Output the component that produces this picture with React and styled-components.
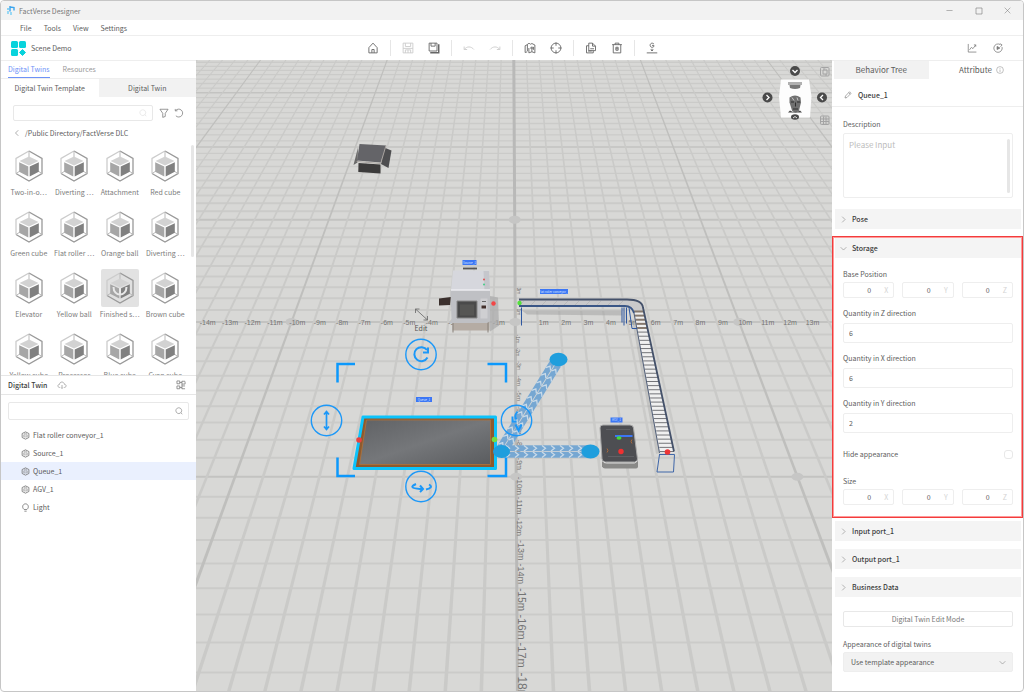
import React from 'react'
import styled, { createGlobalStyle } from 'styled-components'

const templates = [
  'Two-in-o⋯', 'Diverting ⋯', 'Attachment', 'Red cube',
  'Green cube', 'Flat roller ⋯', 'Orange ball', 'Diverting ⋯',
  'Elevator', 'Yellow ball', 'Finished s⋯', 'Brown cube',
  'Yellow cube', 'Processor', 'Blue cube', 'Cyan cube',
]

const twins = ['Flat roller conveyor_1', 'Source_1', 'Queue_1', 'AGV_1', 'Light']

/* ---------- icons ---------- */

const icons = {
  home: <path d="M2.500 7.500 8 1.500l5.500 6V14.500H2.500zM6.500 14.500V10h3v4.500" />,
  save: <path d="M1.500 1.500h13v13h-13zM4.500 1.500v4.500h7v-4.500M1.500 8.500h13M4.500 14.500v-4h7v4M8 10.500v4" />,
  saveAs: (
    <>
      <path d="M1.500 1.500h10.500v10.500h-10.500zM4 1.500v4h5.500v-4" />
      <path d="M14.300 3v11.300H3" strokeWidth="2" />
    </>
  ),
  undo: <path d="M1.500 6v4h4M1.800 9.800C5 5.500 11 5.500 14.500 10" />,
  redo: <path d="M14.500 6v4h-4M14.200 9.800C11 5.500 5 5.500 1.500 10" />,
  map: <path d="M4.500 3.500 1.500 5v9l3-1M4.500 3.500V12M4.500 3.500C5 1.500 8 1.500 8.500 3l2-1 4 2v10.500l-4-1.500-4 1.500V8M10.500 6v7M8 8h5M12.500 6.500v4" />,
  target: (
    <>
      <circle cx="8" cy="8" r="6.500" />
      <path d="M8 .5v4.500M8 11v4.500M.5 8H5M11 8h4.500" />
    </>
  ),
  copy: <path d="M5 1.500h5l4 4v6H5zM10 1.500v4h4M5 5H2v9.500h9v-3M4 12h5M7 9h5" />,
  trash: <path d="M1.500 3.500h13M5.500 3.500v-2h5v2M3 3.500v11h10v-11M6.500 7v4h3V7zM6.500 9h3" />,
  ground: <path d="M10.500 2.500C8 .5 5.500 2 5.500 4.500S8.500 8 10.500 6V4.500H8M8 9v3M6.500 10 8 12l1.500-2M1 14.500h14" />,
  chart: <path d="M2 1.500v13h13M4 11l3-4 2.500 2L14 3M11 3h3v3" />,
  play: (
    <>
      <path d="M14.500 6.500A6.700 6.700 0 1 1 11.500 2.500M11 1l3.500 2-2.500 3" />
      <path d="M6.500 5.500v5L11 8z" fill="currentColor" />
    </>
  ),
  search: <path d="M7.500 1.500a5.800 5.800 0 1 0 .1 0M11.800 11.500l2.700 3" />,
  filter: <path d="M1.500 2h13L10 8.500v5L6 15V8.500z" />,
  refresh: <path d="M2 4.500v-3M2 4.500h3.500M2.500 4.300A6.300 6.300 0 1 1 3 12.500" />,
  left: <path d="M10.500 2.500 5 8l5.500 5.500" />,
  right: <path d="M5 1.500 11.500 8 5 14.500" />,
  down: <path d="M1.500 5 8 11.500 14.500 5" />,
  cloud: <path d="M4.500 12C.5 12 .5 7 4 7c.5-5 7-5 8 0 3.500 0 3.500 5-.5 5M8 8v5.500M6.500 12 8 13.500 9.500 12" />,
  tree: <path d="M1.500 1.500H6V6H1.500zM1.500 9.500H6V14H1.500zM6 4h3.500M6 12h3.500M9.500 1.500v13M9.500 2h5M9.500 6.500h5v-4M9.500 9.500h5M9.500 14h5" />,
  cube: (
    <>
      <path d="M8 1.500l6 3v7l-6 3-6-3v-7z" />
      <path d="M5 7v3.500h6V7zM5 5.500 8 4l3 1.500" strokeWidth="1" />
    </>
  ),
  bulb: <path d="M5.500 11.500C1 8 3 1.500 8 1.500s7 6.500 2.500 10zM6 14.500h4" />,
  pencil: <path d="M2 14l1-4 8-8.500 3 3L6 13zM9.500 3.500l3 3" />,
  info: (
    <>
      <circle cx="8" cy="8" r="6.800" />
      <path d="M8 7v5M8 4v1.500" />
    </>
  ),
  minimize: <path d="M1 8h14" />,
  maximize: <path d="M2 2h12v12H2z" />,
  close: <path d="M1.500 1.500l13 13M14.500 1.500l-13 13" />,
}

const Glyph = styled.svg`
  width: ${p => p.$size || 10}px;
  height: ${p => p.$size || 10}px;
  flex: none;
  display: block;
  fill: none;
  stroke: currentColor;
  stroke-width: ${p => p.$weight || 1.2};
  color: ${p => p.$color || '#777'};
`

const Icon = ({ name, size, color, weight }) => (
  <Glyph viewBox="0 0 16 16" $size={size} $color={color} $weight={weight} aria-hidden="true">
    {icons[name]}
  </Glyph>
)

const TemplateIcon = ({ loading }) => (
  <svg width="30" height="32" viewBox="0 0 30 32" aria-hidden="true">
    <path d="M15 1 28 8.500v15L15 31 2 23.500v-15z" fill={loading ? '#e0e0e0' : '#fff'} />
    <path d="M15 1 2 8.500v15" fill="none" stroke="#ccc" strokeWidth="1.300" />
    <path d="M15 1 28 8.500v15L15 31 2 23.500" fill="none" stroke="#999" strokeWidth="1.300" />
    <path d="M15 1v6M2 23.500l4-2.500M28 23.500l-4-2.500" stroke="#bbb" />
    <path d="M15 6.500 24.500 11l-9.500 4.500L5.500 11z" fill="#d2d2d2" />
    <path d="M5.200 12.200 14.300 16.500v10L5.200 21.700z" fill="#a6a6a6" />
    <path d="M24.800 12.200 15.700 16.500v10l9.100-4.800z" fill="#808080" />
    {loading && <path d="M8.500 15c0 10 13 10 13 0M15 16v7" fill="none" stroke="#e8e8e8" strokeWidth="2" />}
  </svg>
)

/* ---------- 3D scene ---------- */

// ground plane projection, one unit is a metre
const rowY = k => (322.5 + 5.74 * k) / (1 - 0.0204 * k)
const axisX = y => 513.8 + (y - 60) * 0.0057
const colX = (m, y) => axisX(y) + m * 22.4 * ((y + 281) / 604)

const range = (from, to) => Array.from({ length: to - from + 1 }, (_, i) => from + i)

const Floor = () => (
  <g>
    <rect x="-400" y="-200" width="1900" height="1200" fill="#d8d8d6" />
    {range(-46, 18).map(k => (
      <line key={k} x1="-400" x2="1500" y1={rowY(k)} y2={rowY(k)}
        stroke={k % 10 === 0 ? '#c3c3c1' : '#cbcbc9'} strokeWidth={k < -15 ? 1.3 : 2} />
    ))}
    {range(-50, 50).filter(m => m !== 0).map(m => {
      const w = 0.05
      const pts = [[m - w, 0], [m + w, 0], [m + w, 760], [m - w, 760]]
      return (
        <polygon key={m} points={pts.map(([c, y]) => `${colX(c, y)},${y}`).join(' ')}
          fill={m % 10 === 0 ? '#bfbfbd' : '#cacac8'} />
      )
    })}
    <line x1={axisX(0)} y1="0" x2={axisX(760)} y2="760" stroke="#b9b9b8" strokeWidth="3" />
    {[[0, -10], [0, 0], [0, 10], [-10, 0], [10, 0], [10, 10]].map(([m, k]) => (
      <ellipse key={`${m}:${k}`} cx={colX(m, rowY(k))} cy={rowY(k)} rx="6" ry="4" fill="#c6c6c5" />
    ))}
  </g>
)

const Rulers = () => (
  <g fill="#747474" fontFamily='"Liberation Sans", Arial, sans-serif'>
    {range(-14, 13).filter(m => m !== 0).map(m => (
      <text key={m} x={colX(m, 323) + 6} y="325" fontSize="7" textAnchor="middle">{m}m</text>
    ))}
    {range(1, 18).map(k => (
      <text key={k} fontSize={Math.round((rowY(k + 1) - rowY(k)) * 0.38)}
        transform={`translate(${axisX(rowY(k)) + 1} ${rowY(k)}) rotate(90)`}>-{k}m</text>
    ))}
    <text fontSize="5" transform="translate(517 309) rotate(90)">1m</text>
    <text fontSize="5" transform="translate(517 288) rotate(90)">3m</text>
  </g>
)

const Track = ({ x1, y1, x2, y2 }) => {
  const length = Math.hypot(x2 - x1, y2 - y1)
  const angle = Math.atan2(y2 - y1, x2 - x1) * 180 / Math.PI
  return (
    <g transform={`translate(${x1} ${y1}) rotate(${angle})`}>
      {[-3.3, 3.3].map(lane => (
        <g key={lane} transform={`translate(0 ${lane})`}>
          <rect y="-2.900" width={length} height="5.800" fill="#76a7d2" />
          {range(1, Math.floor(length / 9)).map(i => (
            <path key={i} d={`M${i * 9 - 4}-2.800l3.500 2.800-3.500 2.800`} fill="none" stroke="#c9dae8" strokeWidth="1.300" />
          ))}
        </g>
      ))}
    </g>
  )
}

const Tag = ({ x, y, w, children }) => (
  <g>
    <rect x={x - w / 2} y={y - 2.5} width={w} height="5" fill="#3b76f5" />
    <text x={x} y={y + 1} fontSize="3" fill="#dbe6ff" textAnchor="middle">{children}</text>
  </g>
)

const Box = () => (
  <g>
    <path d="M358 148 353.500 165.500 357.500 163z" fill="#6a6a6a" />
    <path d="M384 148l7.500 3-3 17.500-7.500-4z" fill="#4e4e50" />
    <path d="M358.500 163.500 380.500 165v9l-22.200-1.500z" fill="#3c3b3b" />
    <path d="M359.500 144.500 386 146l-5.300 17-23.700-2z" fill="#646468" />
    <path d="M386 146l-5.300 18-24-2" fill="none" stroke="#a9a4a0" />
  </g>
)

const SourceMachine = () => (
  <g>
    <path d="M488 296l10 2 1 28-9 6z" fill="#aaa" opacity=".7" />
    <path d="M452.500 323h37v8h-37z" fill="#b5aca4" />
    <path d="M453 322v11M488 322v11" stroke="#88817a" />
    <path d="M439 299l12-1.500-1 8-11 .5z" fill="#3b302d" />
    <path d="M451 305l4 8" stroke="#999" />
    <path d="M453 271h36l1 20h-39z" fill="#d6d7dd" />
    <path d="M483.500 271.500h5.500l1 20h-5.500z" fill="#c5c6cc" />
    <path d="M450.500 290.500h39.500v31l-3 2h-38l2.500-4z" fill="#bfc0c4" />
    <path d="M451 290.500h39" stroke="#ececf0" strokeWidth="1.500" />
    <path d="M457 301.500h20v17h-20z" fill="#4a4a4a" stroke="#888" />
    <path d="M460 305h14v11h-14z" fill="#565654" />
    <path d="M480.500 299v20h7v-20z" fill="#cfcfd2" />
    <path d="M481.500 306h4.500v3h-4.500z" fill="#43302c" />
    <path d="M482 302h4" stroke="#666" />
    <circle cx="484" cy="280" r=".9" fill="#d44" />
    <circle cx="484" cy="285" r="1" fill="#4c8" />
    <path d="M463 269h14" stroke="#555" strokeWidth="1.800" />
    <circle cx="493.500" cy="304" r="2.200" fill="#f24646" />
  </g>
)

const Conveyor = () => (
  <g fill="none">
    <path d="M522 311h100v5l-95-1z" fill="#999" opacity=".45" stroke="none" />
    <path d="M634 320l24 134" stroke="#888" strokeWidth="4" opacity=".25" />
    <path d="M519 300h108q15 0 16 8l31 144-14 1-27-140q-2-5-8-6H519z" fill="#c9c9cb" />
    <path d="M634 312h9.500l31 141H660z" fill="#f0f0f0" />
    {range(0, 9).map(i => <path key={i} d={`M${524 + i * 11} 301.500l-4 4`} stroke="#aaa" strokeWidth=".5" />)}
    {range(0, 34).map(i => {
      const t = i / 34
      const y = 312 + 140 * t
      return (
        <path key={i} d={`M${634 + 26 * t} ${y}L${644 + 30 * t} ${y}`}
          stroke={i < 5 ? '#85786d' : '#65676b'} strokeWidth={i < 5 ? 2 : 0.9} />
      )
    })}
    <path d="M519 300h108q15 0 16 8l31 144" stroke="#44516a" strokeWidth="1.800" />
    <path d="M519 306.500h106q7 0 9 7" stroke="#3a5686" strokeWidth="1.800" />
    <path d="M634 313.500l25.500 140" stroke="#52607a" />
    <path d="M521.500 308v18M622 308v15M624 308v18M626.500 308v16M629 308l3 21h5" stroke="#2e57a0" />
    <path d="M659 455h15.500M659.500 455l-2.500 17.500h16.500l1-17.500" stroke="#3f66a8" />
    <circle cx="519.500" cy="303.500" r="2.200" fill="#55e03b" />
    <circle cx="667.500" cy="452.500" r="2.800" fill="#ee3434" />
  </g>
)

const Queue = () => (
  <g>
    <path d="M363 417.500h132.500v51.500H354z" fill="#8d5a2e" stroke="#0cc3fb" strokeWidth="3" strokeLinejoin="round" />
    <path d="M366.500 420.500h124v44.500h-131z" fill="url(#steel)" stroke="#b0723a" strokeWidth=".8" />
    <circle cx="359" cy="440.500" r="2.800" fill="#e94141" />
    <circle cx="494.500" cy="440" r="2.800" fill="#74dd43" />
  </g>
)

const Agv = () => (
  <g>
    <path d="M602 460l36 1v6q0 2-2 2h-31q-2 0-3-2z" fill="#898987" />
    <path d="M603 425.500h27q3 0 3.500 3l4 31q0 3-3 3h-29q-3 0-3.500-3l-2-31q0-3 3-3z" fill="#4d4e52" stroke="#a9a9a9" />
    <path d="M602.500 461.500q1 2 4 2h28l3-2" fill="none" stroke="#ddd" />
    <path d="M606 430l24 0M608 457h26" stroke="#5f6064" />
    <path d="M607 449q2 2 0 4M632 440q-2 2 0 4" stroke="#a5683d" fill="none" />
    <path d="M615 435.500h17.500v2H615z" fill="#3b76f5" />
    <ellipse cx="619" cy="438.500" rx="2.500" ry="1.800" fill="#47d836" />
    <circle cx="621" cy="452" r="2.700" fill="#f03131" />
  </g>
)

const Handle = ({ x, y, children }) => (
  <g transform={`translate(${x} ${y})`} fill="none" stroke="#1c98f8" strokeWidth="2">
    <circle r="15.200" strokeWidth="1.400" />
    {children}
  </g>
)

const Manipulator = () => (
  <g>
    <path d="M337.500 383v-18.500H355M487.500 364.500H506V383M337.500 458v18.500H355M487.500 476.500H506V458"
      fill="none" stroke="#0c98fb" strokeWidth="2.500" />
    <Handle x={421} y={355}>
      <path d="M6-4.500a7 7 0 1 0 .5 7.500M7-7v5H2" />
    </Handle>
    <Handle x={326.500} y={421}>
      <path d="M0-9V9M-2.500-6 0-9l2.500 3M-2.500 6 0 9l2.500-3" strokeWidth="1.700" />
    </Handle>
    <Handle x={516.500} y={421}>
      <path d="M1-9q-4 5-1 8M-4-4v5h4M-1 4l3 6 3-6" />
    </Handle>
    <Handle x={421} y={487}>
      <path d="M-5-2.500q-9 4 4 5H1M-1-1l3 3.500-3 3M5 3q8-2 3-5" />
    </Handle>
  </g>
)

const ViewCube = () => (
  <g>
    <path d="M781 80h28l2.500 17-1.500 21h-29l-2-21z" fill="#fdfdfd" />
    <path d="M789 82.500h12l-1 6q-5 2-10 0z" fill="#777" />
    <path d="M788 82.500h14v3h-14z" fill="#b0b0b0" />
    <path d="M789.500 98q5.500-4 11 0l.5 5-2 8q-3.500 4-7 0l-2.500-8z" fill="#707070" />
    <path d="M791 102.500h3M797 102.500h3M795.500 103v4M793 109.500h5" stroke="#303030" />
    <path d="M792 98l2 3M797 98l1 3" stroke="#c7c7c7" />
    <path d="M790 111q5 3 10 0l2 2H788z" fill="#444" />
    {[[795, 71.5, 0], [767.5, 98, -90], [822, 98, 90]].map(([x, y, turn]) => (
      <g key={x} transform={`translate(${x} ${y}) rotate(${turn})`}>
        <circle r="5" fill="#4a4a4a" />
        <path d="M-2.500-1 0 1.500 2.500-1" fill="none" stroke="#fff" strokeWidth="1.300" />
      </g>
    ))}
    <ellipse cx="795" cy="117.500" rx="4" ry="2.700" fill="#4a4a4a" />
    <path d="M793 118.500l2-1.500 2 1.500" fill="none" stroke="#ddd" />
    <g fill="none" stroke="#a4a4a4">
      <rect x="820.500" y="68" width="8.500" height="8.500" rx="1" />
      <path d="M823 70.500v4h4v-4zM824 68.500v2M826 74.500v2" />
      <rect x="820.500" y="116.500" width="8.500" height="8.500" rx="1" />
      <path d="M821 119.500h8M821 122h8M823.500 117v8M826 117v8" />
    </g>
  </g>
)

const Scene = () => (
  <SceneSvg viewBox="196 60 636 632" preserveAspectRatio="xMidYMid slice" role="img" aria-label="Scene view">
    <defs>
      <linearGradient id="steel" x1="0" y1="0" x2="1" y2="1">
        <stop offset="0" stopColor="#606265" />
        <stop offset=".5" stopColor="#75777a" />
        <stop offset="1" stopColor="#5a5c5f" />
      </linearGradient>
    </defs>
    <Floor />
    <Rulers />
    <Box />
    <SourceMachine />
    <Conveyor />
    <Track x1={501} y1={452} x2={558} y2={360} />
    <Track x1={501} y1={452} x2={591} y2={452} />
    <Queue />
    <g fill="#1f9edd">
      <ellipse cx="501.500" cy="452" rx="8.500" ry="6.500" />
      <ellipse cx="558.500" cy="360" rx="9" ry="6.800" />
      <ellipse cx="590.500" cy="452" rx="9" ry="7" />
    </g>
    <Agv />
    <Manipulator />
    <path d="M415.500 309.500l12 11M415.500 313.500v-4h4M427.500 316.500v4h-4" fill="none" stroke="#666" strokeWidth=".8" />
    <text x="421" y="331" fontSize="7" fill="#555" textAnchor="middle">Edit</text>
    <Tag x={469.500} y={263} w={14}>Source_1</Tag>
    <Tag x={424} y={400} w={16}>Queue_1</Tag>
    <Tag x={554} y={292} w={28}>Flat roller conveyor_1</Tag>
    <Tag x={616.500} y={420.500} w={12}>AGV_1</Tag>
    <ViewCube />
  </SceneSvg>
)

/* ---------- attribute panel parts ---------- */

const Vector = ({ label }) => (
  <Field as="fieldset">
    <legend>{label}</legend>
    <VectorRow>
      {['X', 'Y', 'Z'].map(axis => (
        <AxisBox key={axis}>
          <input defaultValue="0" aria-label={`${label} ${axis}`} />
          <span>{axis}</span>
        </AxisBox>
      ))}
    </VectorRow>
  </Field>
)

const Quantity = ({ axis, value }) => (
  <Field>
    <label htmlFor={`quantity-${axis}`}>Quantity in {axis} direction</label>
    <TextInput id={`quantity-${axis}`} defaultValue={value} />
  </Field>
)

const Section = ({ title, open }) => (
  <SectionHead type="button" aria-expanded={!!open}>
    <Icon name={open ? 'down' : 'right'} size={7} />
    {title}
  </SectionHead>
)

const App = () => {
  return (
    <Window>
      <GlobalStyle />
      <TitleBar>
        <svg width="8" height="9" viewBox="0 0 8 9" aria-hidden="true">
          <path d="M3 0v5.500M3 1l4 .5v3" fill="none" stroke="#3aa5ee" strokeWidth="1.400" />
          <path d="M0 3h2M1 5v3M4 6v3" stroke="#67c9f5" strokeWidth="1.300" />
        </svg>
        <h1>FactVerse Designer</h1>
        <WindowButton type="button" aria-label="Minimize"><Icon name="minimize" size={7} /></WindowButton>
        <WindowButton type="button" aria-label="Maximize"><Icon name="maximize" size={8} /></WindowButton>
        <WindowButton type="button" aria-label="Close"><Icon name="close" size={7} /></WindowButton>
      </TitleBar>

      <MenuBar>
        {['File', 'Tools', 'View', 'Settings'].map(m => <button type="button" key={m}>{m}</button>)}
      </MenuBar>

      <Toolbar>
        <SceneName>
          <svg width="15" height="15" viewBox="0 0 15 15" fill="#08d3dc" aria-hidden="true">
            <rect width="7" height="7" rx="1.500" />
            <rect x="8" width="7" height="7" rx="1.500" />
            <rect y="8" width="7" height="7" rx="1.500" />
            <path d="M11.500 8.500 14.500 11.500 11.500 14.500 8.500 11.500z" stroke="#08d3dc" strokeLinejoin="round" />
          </svg>
          Scene Demo
        </SceneName>
        <Tools>
          {[['home'], ['save', 'saveAs'], ['undo', 'redo'], ['map', 'target'], ['copy', 'trash'], ['ground']].map(group => (
            <ToolGroup key={group[0]}>
              {group.map(name => (
                <IconButton type="button" key={name} aria-label={name}>
                  <Icon name={name} size={12} color={['save', 'undo', 'redo'].includes(name) ? '#ccc' : '#666'} />
                </IconButton>
              ))}
            </ToolGroup>
          ))}
        </Tools>
        <RunTools>
          <IconButton type="button" aria-label="Statistics"><Icon name="chart" size={10} /></IconButton>
          <IconButton type="button" aria-label="Run"><Icon name="play" size={10} /></IconButton>
        </RunTools>
      </Toolbar>

      <Main>
        <LeftPanel>
          <Tabs>
            <Tab type="button" $active>Digital Twins</Tab>
            <Tab type="button">Resources</Tab>
          </Tabs>
          <SubTabs>
            <SubTab type="button" $active>Digital Twin Template</SubTab>
            <SubTab type="button">Digital Twin</SubTab>
          </SubTabs>
          <SearchRow>
            <SearchBox $height={16}>
              <input aria-label="Search templates" />
              <Icon name="search" size={8} color="#ddd" />
            </SearchBox>
            <IconButton type="button" aria-label="Filter"><Icon name="filter" size={10} /></IconButton>
            <IconButton type="button" aria-label="Refresh"><Icon name="refresh" size={10} /></IconButton>
          </SearchRow>
          <Crumb type="button">
            <Icon name="left" size={8} />
            /Public Directory/FactVerse DLC
          </Crumb>
          <Library>
            <Templates>
              {templates.map((name, i) => (
                <Template key={i}>
                  <TemplateTile $busy={i === 10}><TemplateIcon loading={i === 10} /></TemplateTile>
                  <span>{name}</span>
                </Template>
              ))}
            </Templates>
            <Thumb $height={112} />
          </Library>
          <TwinHead>
            <h2>Digital Twin</h2>
            <Icon name="cloud" size={10} color="#999" />
            <IconButton type="button" aria-label="Tree view"><Icon name="tree" size={10} /></IconButton>
          </TwinHead>
          <TwinSearch>
            <SearchBox $height={18}>
              <input aria-label="Search twins" />
              <Icon name="search" size={8} />
            </SearchBox>
          </TwinSearch>
          <TwinList>
            {twins.map(name => (
              <TwinRow key={name} $selected={name === 'Queue_1'}>
                <Icon name={name === 'Light' ? 'bulb' : 'cube'} size={9} weight={1.5} />
                {name}
              </TwinRow>
            ))}
          </TwinList>
        </LeftPanel>

        <Viewport><Scene /></Viewport>

        <RightPanel>
          <PanelTabs>
            <PanelTab type="button" $muted>Behavior Tree</PanelTab>
            <PanelTab type="button">Attribute <Icon name="info" size={8} color="#999" /></PanelTab>
          </PanelTabs>
          <NameRow>
            <Icon name="pencil" size={8} />
            <h2>Queue_1</h2>
          </NameRow>
          <Description>
            <label htmlFor="description">Description</label>
            <AreaBox>
              <textarea id="description" placeholder="Please Input" />
              <Thumb $height={54} />
            </AreaBox>
          </Description>
          <Section title="Pose" />
          <Highlight>
            <Section title="Storage" open />
            <Fields>
              <Vector label="Base Position" />
              <Quantity axis="Z" value="6" />
              <Quantity axis="X" value="6" />
              <Quantity axis="Y" value="2" />
              <CheckField>
                Hide appearance
                <input type="checkbox" />
              </CheckField>
              <Vector label="Size" />
            </Fields>
          </Highlight>
          <Sections>
            <Section title="Input port_1" />
            <Section title="Output port_1" />
            <Section title="Business Data" />
          </Sections>
          <Footer>
            <EditButton type="button">Digital Twin Edit Mode</EditButton>
            <label htmlFor="appearance">Appearance of digital twins</label>
            <SelectBox>
              <select id="appearance">
                <option>Use template appearance</option>
              </select>
              <Icon name="down" size={7} />
            </SelectBox>
          </Footer>
        </RightPanel>
      </Main>
    </Window>
  )
}

const GlobalStyle = createGlobalStyle`
  * { box-sizing: border-box; }
  body {
    margin: 0;
    background: #fff;
    color: #5c5c5c;
    font: 7px/12px "Noto Sans CJK SC", "Noto Sans", sans-serif;
  }
  button, input, textarea, select {
    font: inherit;
    color: inherit;
    border: 0;
    padding: 0;
    margin: 0;
    background: none;
    outline: none;
    min-width: 0;
  }
  h1, h2, ul, fieldset, legend { margin: 0; padding: 0; border: 0; }
  h1, h2 { font-size: 7px; line-height: 12px; font-weight: 400; }
  ul { list-style: none; }
`

const Window = styled.div`
  height: 100vh;
  display: flex;
  flex-direction: column;
  border: 1px solid #c6c6c6;
  border-radius: 4px;
  overflow: hidden;
`

const TitleBar = styled.header`
  flex: none;
  height: 19px;
  display: flex;
  align-items: center;
  padding: 0 1px 0 6px;
  background: #f2f2f2;
  color: #777;
  h1 { flex: 1; margin-left: 4px; }
`

const WindowButton = styled.button`
  width: 29px;
  display: flex;
  justify-content: center;
`

const MenuBar = styled.nav`
  flex: none;
  height: 16px;
  display: flex;
  align-items: center;
  gap: 12px;
  padding-left: 19px;
  border-bottom: 1px solid #eee;
`

const Toolbar = styled.div`
  flex: none;
  height: 24px;
  display: grid;
  grid-template-columns: 1fr auto 1fr;
  align-items: center;
`

const SceneName = styled.div`
  display: flex;
  align-items: center;
  gap: 5px;
  padding-left: 10px;
`

const Tools = styled.div`
  display: flex;
`

const ToolGroup = styled.div`
  display: flex;
  gap: 14px;
  padding: 2px 11px;
  & + & { border-left: 1px solid #e6e6e6; }
`

const IconButton = styled.button`
  flex: none;
  display: flex;
`

const RunTools = styled.div`
  display: flex;
  justify-content: flex-end;
  gap: 16px;
  padding-right: 20px;
`

const Main = styled.main`
  flex: 1;
  min-height: 0;
  display: grid;
  grid-template-columns: 195px minmax(0, 1fr) 191px;
  grid-template-rows: minmax(0, 1fr);
`

const LeftPanel = styled.aside`
  display: flex;
  flex-direction: column;
  min-height: 0;
  border-top: 1px solid #eee;
`

const Tabs = styled.div`
  flex: none;
  height: 18px;
  display: flex;
  gap: 13px;
  padding-left: 7px;
  border-bottom: 1px solid #eee;
`

const Tab = styled.button`
  color: ${p => p.$active ? '#6d92f7' : '#999'};
  border-bottom: 1px solid ${p => p.$active ? '#6d92f7' : 'transparent'};
`

const SubTabs = styled.div`
  flex: none;
  height: 18px;
  display: grid;
  grid-template-columns: 1fr 1fr;
`

const SubTab = styled.button`
  background: ${p => p.$active ? '#fff' : '#f2f2f2'};
`

const SearchRow = styled.div`
  flex: none;
  display: flex;
  align-items: center;
  gap: 5px;
  padding: 8px 12px 0;
  & > div { margin-right: 1px; }
`

const SearchBox = styled.div`
  flex: 1;
  height: ${p => p.$height}px;
  display: flex;
  align-items: center;
  padding: 0 5px;
  border: 1px solid #e8e8e8;
  border-radius: 2px;
  input { flex: 1; }
`

const Crumb = styled.button`
  flex: none;
  height: 24px;
  display: flex;
  align-items: center;
  gap: 4px;
  padding-left: 12px;
`

const Library = styled.div`
  flex: none;
  height: 230px;
  display: flex;
  align-items: flex-start;
  overflow: hidden;
  padding: 0 2px 0 5px;
`

const Thumb = styled.div`
  flex: none;
  width: 3px;
  height: ${p => p.$height}px;
  border-radius: 2px;
  background: #e6e6e6;
`

const Templates = styled.ul`
  flex: 1;
  display: grid;
  grid-template-columns: repeat(4, minmax(0, 1fr));
  padding-top: 2px;
  margin-right: 3px;
`

const Template = styled.li`
  height: 61px;
  display: flex;
  flex-direction: column;
  align-items: center;
  color: #7c7c7c;
  white-space: nowrap;
`

const TemplateTile = styled.div`
  width: 38px;
  height: 38px;
  flex: none;
  display: flex;
  align-items: center;
  justify-content: center;
  margin-bottom: 1px;
  border-radius: 2px;
  background: ${p => p.$busy ? '#e2e2e2' : 'transparent'};
`

const TwinHead = styled.div`
  flex: none;
  height: 20px;
  display: flex;
  align-items: center;
  gap: 10px;
  padding: 0 10px 0 7px;
  border: solid #e6e6e6;
  border-width: 1px 0;
  h2 { color: #3c3c3c; font-weight: 500; }
  button { margin-left: auto; }
`

const TwinSearch = styled.div`
  flex: none;
  display: flex;
  padding: 7px 7px 6px;
`

const TwinList = styled.ul`
  flex: 1;
  overflow: hidden;
`

const TwinRow = styled.li`
  height: 18px;
  display: flex;
  align-items: center;
  gap: 3px;
  padding-left: 20px;
  background: ${p => p.$selected ? '#eaf0fe' : 'transparent'};
`

const Viewport = styled.section`
  min-width: 0;
  min-height: 0;
`

const SceneSvg = styled.svg`
  display: block;
  width: 100%;
  height: 100%;
`

const RightPanel = styled.aside`
  display: flex;
  flex-direction: column;
  min-height: 0;
  overflow: hidden;
  border-top: 1px solid #eee;
`

const PanelTabs = styled.div`
  flex: none;
  height: 18px;
  display: grid;
  grid-template-columns: 1fr 1fr;
  padding-left: 2px;
  font-size: 8px;
`

const PanelTab = styled.button`
  display: flex;
  align-items: center;
  justify-content: ${p => p.$muted ? 'center' : 'flex-end'};
  gap: 4px;
  padding-right: ${p => p.$muted ? 0 : 19}px;
  background: ${p => p.$muted ? '#f2f2f2' : '#fff'};
`

const NameRow = styled.div`
  flex: none;
  height: 28px;
  display: flex;
  align-items: center;
  gap: 6px;
  padding: 4px 12px 0;
  border-bottom: 1px solid #eee;
  h2 { color: #3c3c3c; font-weight: 500; }
`

const Description = styled.div`
  flex: none;
  padding: 11px 10px 0 11px;
  margin-bottom: 11px;
  label { display: block; margin-bottom: 3px; }
`

const AreaBox = styled.div`
  height: 65px;
  display: flex;
  padding: 5px 2px 5px 5px;
  border: 1px solid #eee;
  border-radius: 2px;
  textarea { flex: 1; resize: none; font-size: 8px; }
  textarea::placeholder { color: #bbb; }
`

const SectionHead = styled.button`
  flex: none;
  width: auto;
  height: 20px;
  margin: 0 2px 0 3px;
  padding-left: 5px;
  display: flex;
  align-items: center;
  gap: 5px;
  background: #f4f4f4;
  color: #3c3c3c;
  font-weight: 500;
`

const Highlight = styled.section`
  flex: none;
  display: flex;
  flex-direction: column;
  margin-top: 7px;
  border: 1px solid #f23c3c;
  outline: 1px solid #f99;
  outline-offset: -2px;
  ${SectionHead} { margin: 1px 1px 0 2px; }
`

const Fields = styled.div`
  display: flex;
  flex-direction: column;
  gap: 9px;
  padding: 10px 9px 12px 10px;
`

const Field = styled.div`
  display: flex;
  flex-direction: column;
  gap: 4px;
  min-width: 0;
  legend { margin-bottom: 2px; }
`

const VectorRow = styled.div`
  display: grid;
  grid-template-columns: repeat(3, 1fr);
  gap: 8px;
`

const AxisBox = styled.div`
  height: 16px;
  display: flex;
  align-items: center;
  border: 1px solid #eee;
  border-radius: 2px;
  padding-right: 5px;
  input { flex: 1; width: 0; padding-left: 10px; text-align: center; }
  span { color: #d4d4d4; }
`

const TextInput = styled.input`
  height: 20px;
  padding: 0 5px;
  border: 1px solid #eee;
  border-radius: 2px;
`

const CheckField = styled.label`
  height: 24px;
  display: flex;
  align-items: center;
  justify-content: space-between;
  input {
    appearance: none;
    width: 9px;
    height: 9px;
    border: 1px solid #e8e8e8;
    border-radius: 3px;
  }
`

const Sections = styled.div`
  flex: none;
  display: flex;
  flex-direction: column;
  gap: 8px;
  padding-top: 3px;
`

const Footer = styled.div`
  display: flex;
  flex-direction: column;
  padding: 14px 10px 0 11px;
  label { margin: 11px 0 2px; }
`

const EditButton = styled.button`
  height: 16px;
  border: 1px solid #e8e8e8;
  border-radius: 2px;
  color: #777;
`

const SelectBox = styled.div`
  height: 20px;
  display: flex;
  align-items: center;
  padding: 0 6px 0 7px;
  background: #f2f2f2;
  border: 1px solid #eee;
  border-radius: 2px;
  select { flex: 1; appearance: none; }
`

export default App
